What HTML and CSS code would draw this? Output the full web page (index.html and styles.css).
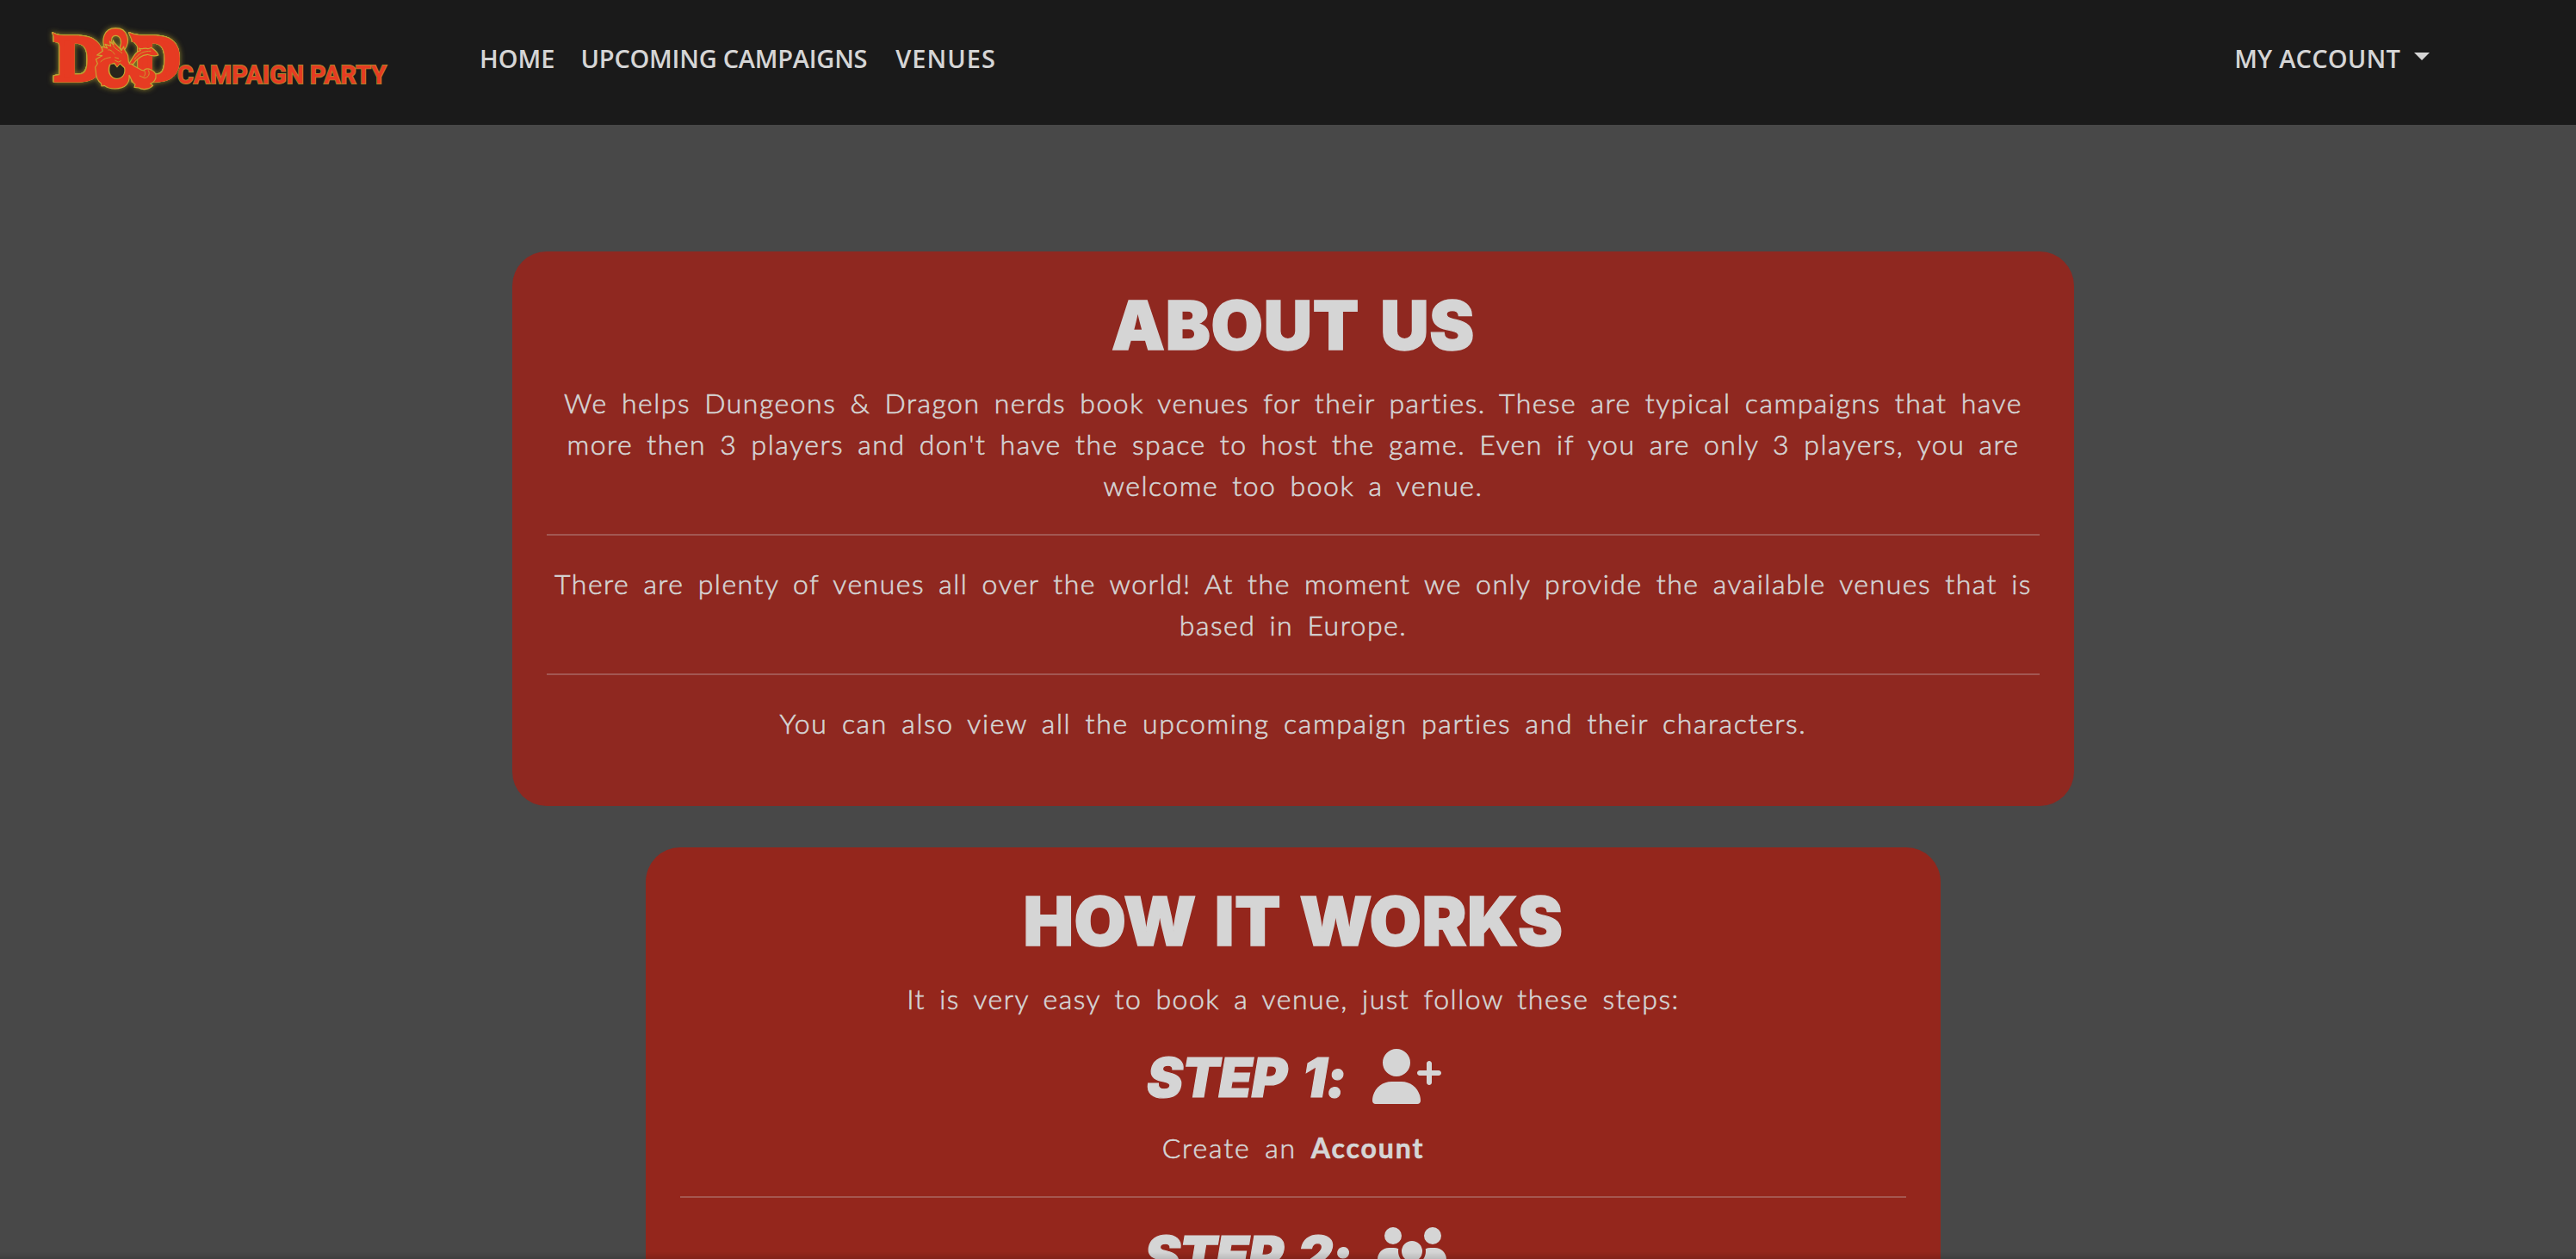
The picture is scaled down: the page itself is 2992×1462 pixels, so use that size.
FILE: index.html
```html
<!DOCTYPE html>
<html lang="en">
<head>
<meta charset="utf-8">
<title>D&amp;D Campaign Party</title>
<link rel="stylesheet" href="styles.css">
</head>
<body>
<header class="navbar">
  <a class="brand" href="#">
    <svg class="logo" width="480" height="145" viewBox="0 0 480 145">
      <g class="logo-mark">
        <g class="letters">
          <path d="M61 38 Q65 41 74 41.5 L92 41.5 L92 48 L76 50 L72 60 Q69 48 64 45 Z"/>
          <path d="M150 38 Q156 41 164 41.5 L182 41.5 L182 48 L168 50 L164 60 Q159 51 154 47 Z"/>
          <text class="logo-d" x="64" y="92.5" textLength="57" lengthAdjust="spacingAndGlyphs">D</text>
          <text class="logo-d" x="155" y="92.5" textLength="55" lengthAdjust="spacingAndGlyphs">D</text>
        </g>
        <g class="dragon" transform="translate(50 22) scale(.33333)">
          <path d="M216 104 C203 76 209 32 253 32 C298 32 304 80 285 106 L276 112 L268 98 C276 80 270 58 253 58 C240 58 236 72 241 82 L236 100 Z"/>
          <path fill-rule="evenodd" d="M244 74 C250 88 266 98 273 110 L281 96 C280 110 292 114 296 128 L298 150 L320 166 C338 174 352 186 354 176 C366 170 388 178 393 194 C396 212 384 222 374 225 L383 232 C370 246 346 248 334 240 L318 238 L321 228 C308 220 306 204 300 196 C302 222 290 243 250 243 C236 243 224 240 214 232 L204 234 L202 224 C188 214 184 202 184 184 L182 168 L190 156 L184 140 L206 128 L188 126 L208 112 L204 96 L224 102 L216 88 L236 94 L232 78 L246 90 Z M232 160 C222 188 238 208 258 208 C276 208 288 192 284 170 L268 156 L258 168 L248 154 Z"/>
          <path class="counter" d="M236 158 C226 188 240 206 258 206 C276 206 286 190 282 172 L268 158 L258 170 L248 158 Z"/>
          <path d="M300 156 C316 130 324 112 340 110 L334 102 C346 108 354 98 366 104 L378 100 C388 108 398 114 402 126 C386 132 376 128 364 124 C344 126 326 140 314 158 Z"/>
          <path class="scale-line" d="M244 92 C252 108 268 110 276 120 M226 108 C238 106 244 116 250 124 M200 150 C212 138 222 136 236 134 M250 134 L264 138 M250 144 L262 150 L272 146 M318 142 C334 118 352 112 376 112 M352 178 C358 188 356 196 350 202 M366 178 C374 190 368 204 354 206 L336 198"/>
        </g>
      </g>
      <text class="logo-name" x="206" y="97" textLength="243" lengthAdjust="spacingAndGlyphs">CAMPAIGN PARTY</text>
    </svg>
  </a>
  <nav class="links">
    <a class="link" href="#">HOME</a>
    <a class="link link-tight" href="#">UPCOMING CAMPAIGNS</a>
    <a class="link link-wide" href="#">VENUES</a>
  </nav>
  <a class="link account" href="#">MY ACCOUNT<span class="caret"></span></a>
</header>
<main class="page">
  <section class="card about">
    <h1 class="title-wide">ABOUT US</h1>
    <p>We helps Dungeons &amp; Dragon nerds book venues for their parties. These are typical campaigns that have<br>more then 3 players and don't have the space to host the game. Even if you are only 3 players, you are<br>welcome too book a venue.</p>
    <hr>
    <p>There are plenty of venues all over the world! At the moment we only provide the available venues that is<br>based in Europe.</p>
    <hr>
    <p class="looser">You can also view all the upcoming campaign parties and their characters.</p>
  </section>
  <section class="card steps">
    <h1>HOW IT WORKS</h1>
    <p>It is very easy to book a venue, just follow these steps:</p>
    <h2 class="step"><span>STEP 1:</span>
      <svg class="icon" viewBox="0 0 640 512"><path d="M96 128a128 128 0 1 1 256 0A128 128 0 1 1 96 128zM0 482.3C0 383.8 79.8 304 178.3 304h91.4C368.2 304 448 383.8 448 482.3c0 16.4-13.3 29.7-29.7 29.7H29.7C13.3 512 0 498.7 0 482.3zM504 312V248H440c-13.3 0-24-10.7-24-24s10.7-24 24-24h64V136c0-13.3 10.7-24 24-24s24 10.7 24 24v64h64c13.3 0 24 10.7 24 24s-10.7 24-24 24H552v64c0 13.3-10.7 24-24 24s-24-10.7-24-24z"/></svg>
    </h2>
    <p class="action">Create an <b>Account</b></p>
    <hr>
    <h2 class="step step-two"><span>STEP 2:</span>
      <svg class="icon" viewBox="0 0 640 512"><path d="M144 0a80 80 0 1 1 0 160A80 80 0 1 1 144 0zM512 0a80 80 0 1 1 0 160A80 80 0 1 1 512 0zM0 298.7C0 239.8 47.8 192 106.7 192h42.7c15.9 0 31 3.5 44.6 9.7c-1.3 7.2-1.9 14.7-1.9 22.3c0 38.2 16.8 72.5 43.3 96c-.2 0-.4 0-.7 0H21.3C9.6 320 0 310.4 0 298.7zM405.3 320c-.2 0-.4 0-.7 0c26.6-23.5 43.3-57.8 43.3-96c0-7.6-.7-15-1.9-22.3c13.6-6.3 28.7-9.7 44.6-9.7h42.7C592.2 192 640 239.8 640 298.7c0 11.8-9.6 21.3-21.3 21.3H405.3zM224 224a96 96 0 1 1 192 0 96 96 0 1 1 -192 0zM128 485.3C128 411.7 187.7 352 261.3 352H378.7C452.3 352 512 411.7 512 485.3c0 14.7-11.9 26.7-26.7 26.7H154.7c-14.7 0-26.7-11.9-26.7-26.7z"/></svg>
    </h2>
  </section>
</main>
<div class="bottom-shade"></div>
</body>
</html>
```

FILE: styles.css
```css
* { box-sizing: border-box; }

body {
  margin: 0;
  height: 1462px;
  overflow: hidden;
  background: #484848;
  color: #d5d5d5;
  font-family: Lato, sans-serif;
}

.navbar {
  display: flex;
  align-items: flex-start;
  height: 145px;
  background: #1a1a1a;
}

.brand { width: 557px; height: 145px; }
.logo { display: block; }

.logo-mark {
  fill: #e63b22;
  filter: drop-shadow(0 0 3px rgba(190, 170, 50, .7));
}

.letters {
  filter: drop-shadow(.8px 0 0 #b8a032) drop-shadow(-.8px 0 0 #b8a032)
    drop-shadow(0 .8px 0 #b8a032) drop-shadow(0 -.8px 0 #b8a032);
}

.logo-d {
  font: 700 75px "Liberation Serif", serif;
  stroke: #e63b22;
  stroke-width: 5;
}

.dragon path { stroke: #c9a832; stroke-width: 3.4; stroke-linejoin: round; }
.dragon .scale-line { fill: none; stroke-width: 2.6; }
.dragon .counter { fill: #26251c; stroke: none; }

.logo-name {
  font: 700 30px Roboto, sans-serif;
  fill: #e63b22;
  stroke: #a8842a;
  stroke-width: 1.8;
  paint-order: stroke;
}

.links { display: flex; padding-top: 48px; gap: 29px; }

.link {
  color: inherit;
  text-decoration: none;
  white-space: nowrap;
  font: 600 29px/40px "Open Sans", sans-serif;
}

.link-tight { letter-spacing: -.25px; margin-left: 1px; }
.link-wide { letter-spacing: 1px; margin-left: 4px; }

.account {
  display: flex;
  margin: 48px 170px 0 auto;
  letter-spacing: .2px;
}

.caret {
  margin: 13px 0 0 16px;
  width: 18px;
  height: 9px;
  background: currentColor;
  clip-path: polygon(0 0, 100% 0, 50% 100%);
}

.page {
  display: flex;
  flex-direction: column;
  align-items: center;
  gap: 48px;
  height: 1317px;
  overflow: hidden;
  padding: 147px 0 0 12px;
}

.card {
  flex: none;
  padding: 40px;
  border-radius: 40px;
  text-align: center;
}

.about { width: 1814px; height: 644px; background: #8f2820; }
.steps { width: 1504px; height: 900px; background: #94261c; }

h1 {
  margin: 0 0 16px;
  padding-bottom: 4px;
  font: 900 78px/92px Inter, sans-serif;
  letter-spacing: .5px;
  word-spacing: 5px;
  -webkit-text-stroke: 1.4px currentColor;
}

.title-wide { letter-spacing: .7px; word-spacing: 8px; }

p {
  margin: 0 0 32px;
  font-weight: 300;
  font-size: 32px;
  line-height: 48px;
  letter-spacing: 1.5px;
  word-spacing: 6px;
  white-space: nowrap;
  -webkit-text-stroke: .6px currentColor;
}

.looser { letter-spacing: 1.63px; }

p b { font-weight: 700; }

.action { letter-spacing: 1.9px; }

hr {
  margin: 0 0 32px;
  height: 2px;
  border: 0;
  background: rgba(213, 213, 213, .28);
}

.step {
  display: flex;
  justify-content: center;
  gap: 31px;
  height: 77px;
  margin: 0 0 16px;
  padding-left: 2px;
  font: italic 900 63px/70px Inter, sans-serif;
  letter-spacing: -.9px;
  word-spacing: 7px;
  -webkit-text-stroke: 1.2px currentColor;
}

.step-two { padding-left: 5px; letter-spacing: -1.4px; }

.icon {
  margin-top: 2px;
  width: 80px;
  height: 64px;
  fill: currentColor;
  -webkit-text-stroke: 0;
}

.bottom-shade {
  position: fixed;
  left: 0;
  right: 0;
  bottom: 0;
  height: 8px;
  background: linear-gradient(transparent, rgba(0, 0, 0, .12));
}
```
